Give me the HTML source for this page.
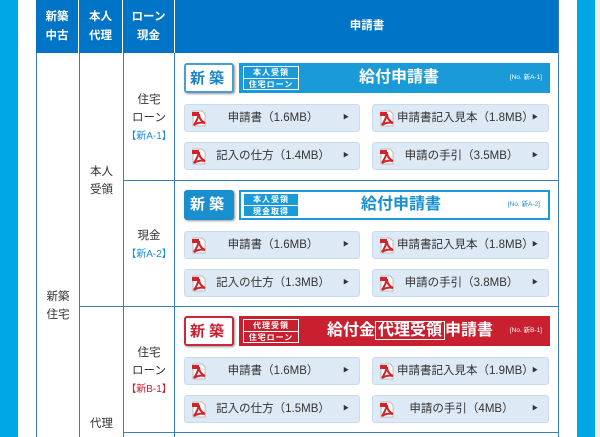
<!DOCTYPE html>
<html><head><meta charset="utf-8"><style>
*{margin:0;padding:0;box-sizing:border-box}
body{width:600px;height:437px;overflow:hidden;background:#fff;font-family:"Liberation Sans","Noto Sans CJK JP",sans-serif;position:relative;color:#333}
.a{position:absolute}
.lb{left:0;top:0;width:18px;height:437px;background:#00a7e6}
.rb{left:577px;top:0;width:18px;height:437px;background:#00a7e6}
.gr{left:595px;top:0;width:5px;height:437px;background:#eee}
.hd{top:0;height:53px;background:#0074c6;color:#fff;font-weight:bold;font-size:11.5px;line-height:19px;text-align:center;display:flex;align-items:center;justify-content:center;border-right:1px solid #fff}
.vl{width:1px;background:#3a7fc0}
.hl{height:1px;background:#3a7fc0}
.ct{font-size:11.5px;line-height:18px;text-align:center;color:#333}
.blu{color:#1a8fd6}.red{color:#c8202e}
.sh{width:50px;height:30px;border-radius:3px;font-weight:bold;font-size:15px;letter-spacing:4px;text-align:center;line-height:28px;box-shadow:1px 1px 2px #999}
.bn{width:311px;height:30px;color:#fff}
.lab{position:absolute;left:4px;top:3px;width:56px;height:24px;border:1px solid #fff;font-size:8px;line-height:11px;text-align:center;letter-spacing:1px;font-weight:bold;white-space:nowrap;overflow:hidden}
.lab div:first-child{border-bottom:1px solid #fff}
.tt{position:absolute;left:60px;width:200px;top:0;text-align:center;font-weight:bold;font-size:16px;line-height:30px}
.no{position:absolute;right:8px;top:0;font-size:6.5px;line-height:30px}
.bt{height:28px;background:#dde9f5;border:1px solid #c8dbee;border-radius:3px;font-size:11.5px;line-height:26px;color:#333}
.bt .ic{position:absolute;left:6px;top:5px}
.bt .ar{position:absolute;right:10px;top:0;font-size:6px}
.bt .tx{position:absolute;left:24px;right:22px;text-align:center;top:0;white-space:nowrap}
</style></head><body>
<div class="a lb"></div><div class="a rb"></div><div class="a gr"></div>
<div class="a hd" style="left:36px;width:43px">新築<br>中古</div>
<div class="a hd" style="left:79px;width:44px">本人<br>代理</div>
<div class="a hd" style="left:123px;width:52px">ローン<br>現金</div>
<div class="a hd" style="left:175px;width:384px;border-right:none">申請書</div>
<div class="a vl" style="left:36px;top:53px;height:384px"></div>
<div class="a vl" style="left:79px;top:53px;height:384px"></div>
<div class="a vl" style="left:123px;top:53px;height:384px"></div>
<div class="a vl" style="left:174px;top:53px;height:384px"></div>
<div class="a vl" style="left:558px;top:0;height:437px"></div>
<div class="a hl" style="left:123px;top:180px;width:436px"></div>
<div class="a hl" style="left:79px;top:306px;width:480px"></div>
<div class="a hl" style="left:123px;top:432px;width:436px"></div>
<div class="a ct" style="left:37px;width:42px;top:288px">新築<br>住宅</div>
<div class="a ct" style="left:80px;width:43px;top:163px">本人<br>受領</div>
<div class="a ct" style="left:80px;width:43px;top:415px">代理</div>
<div class="a ct" style="left:124px;width:50px;top:91px">住宅<br>ローン<br><span class="blu" style="font-size:10px">【新A-1】</span></div>
<div class="a ct" style="left:124px;width:50px;top:227px">現金<br><span class="blu" style="font-size:10px">【新A-2】</span></div>
<div class="a ct" style="left:124px;width:50px;top:344px">住宅<br>ローン<br><span class="red" style="font-size:10px">【新B-1】</span></div>

<div class="a sh" style="left:184px;top:63px;background:#fff;border:2px solid #4a9ed6;color:#1a82c8">新築</div>
<div class="a bn" style="left:239px;top:63px;background:#1a9ad6"><div class="lab"><div>本人受領</div><div>住宅ローン</div></div><div class="tt">給付申請書</div><div class="no">[No. 新A-1]</div></div>
<div class="a sh" style="left:184px;top:190px;background:#1a8fd0;border:1px solid #1a8fd0;color:#fff">新築</div>
<div class="a bn" style="left:239px;top:190px;background:#fff;border:2px solid #1a9ad6;color:#1a8fd0"><div class="lab" style="background:#1a9ad6;color:#fff;top:1px;left:2px"><div>本人受領</div><div>現金取得</div></div><div class="tt" style="line-height:26px">給付申請書</div><div class="no" style="line-height:26px">[No. 新A-2]</div></div>
<div class="a sh" style="left:184px;top:316px;background:#fff;border:2px solid #c8283a;color:#c8202e">新築</div>
<div class="a bn" style="left:239px;top:316px;background:#c8202e"><div class="lab"><div>代理受領</div><div>住宅ローン</div></div><div class="tt" style="left:66px;width:210px">給付金<span style="border:1px solid #fff;padding:0 2px">代理受領</span>申請書</div><div class="no">[No. 新B-1]</div></div>

<svg width="0" height="0" style="position:absolute"><defs><symbol id="p" viewBox="0 0 16 17"><path d="M2 1h9l3 3v12H2z" fill="#fff" stroke="#bbb"/><path d="M3 15c2-3 4-7 5-11 0 4 2 7 6 9-4-1-8 0-11 2z" fill="none" stroke="#d2232a" stroke-width="2"/><rect x="1" y="2" width="7" height="4" fill="#d2232a"/></symbol></defs></svg>

<div id="btns"></div>
<script>
var rows=[[53,["申請書（1.6MB）","申請書記入見本（1.8MB）","記入の仕方（1.4MB）","申請の手引（3.5MB）"]],[180,["申請書（1.6MB）","申請書記入見本（1.8MB）","記入の仕方（1.3MB）","申請の手引（3.8MB）"]],[306,["申請書（1.6MB）","申請書記入見本（1.9MB）","記入の仕方（1.5MB）","申請の手引（4MB）"]]];
var h="";rows.forEach(function(r){r[1].forEach(function(t,i){var x=i%2?372:184,y=r[0]+(i<2?51:89),w=i%2?177:176;
h+='<div class="a bt" style="left:'+x+'px;top:'+y+'px;width:'+w+'px"><svg class="ic" width="16" height="17"><use href="#p"/></svg><span class="tx">'+t+'</span><span class="ar">▶</span></div>';});});
document.getElementById("btns").innerHTML=h;
</script>
</body></html>
